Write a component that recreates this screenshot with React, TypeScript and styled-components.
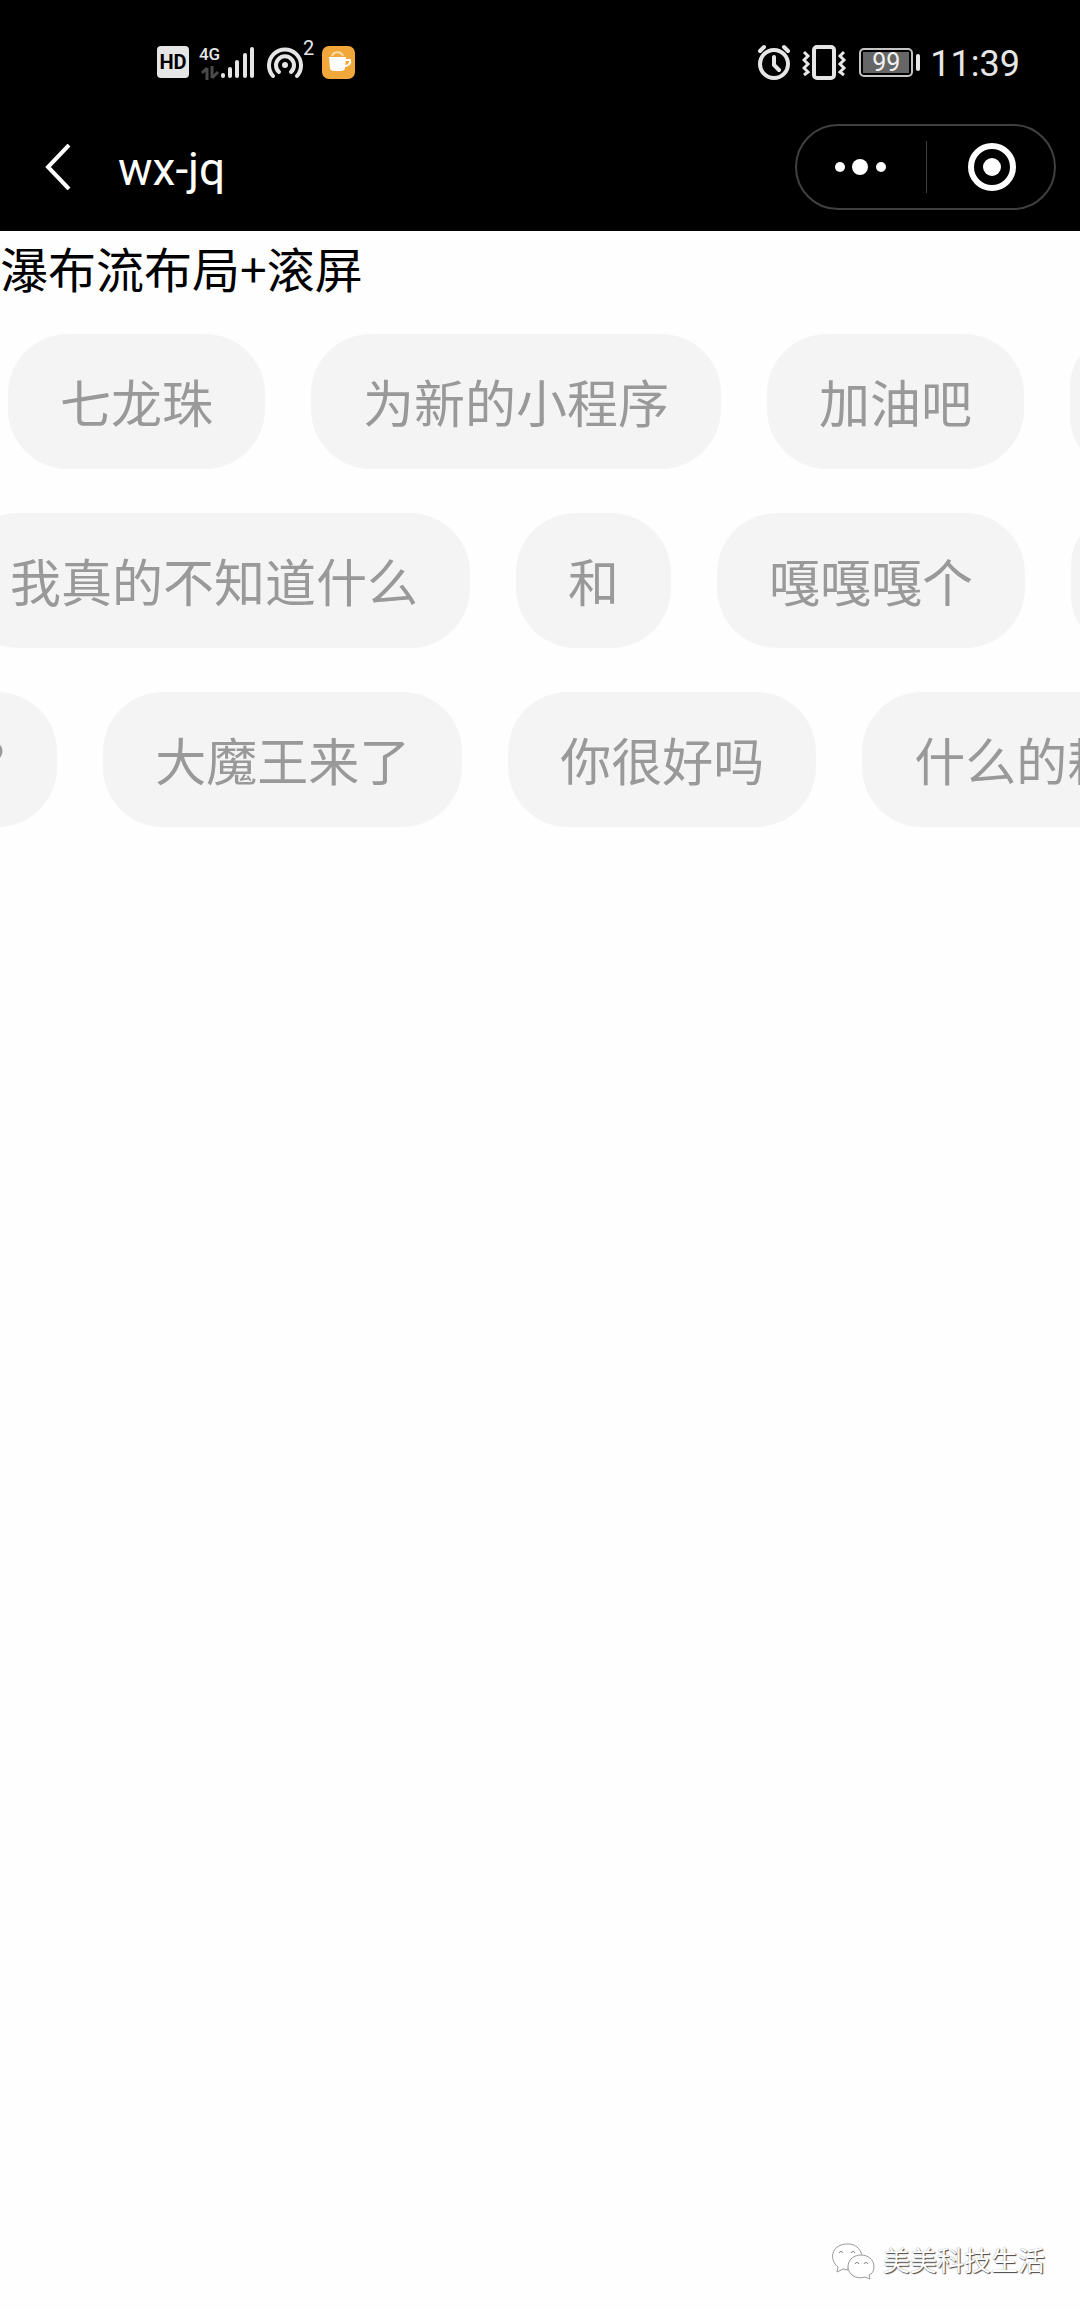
import React from "react";
import styled, { createGlobalStyle } from "styled-components";

const GlobalStyle = createGlobalStyle`
  * { box-sizing: border-box; }
  body {
    margin: 0;
    background: #fefefe;
    font-family: Roboto, "Noto Sans CJK SC", sans-serif;
  }
  button { font: inherit; color: inherit; background: none; border: 0; padding: 0; cursor: pointer; }
  svg { display: block; }
`;

const Page = styled.div`
  display: flex;
  flex-direction: column;
  min-height: 100vh;
  overflow: hidden;
`;

const Header = styled.header`
  background: #000;
  color: #fff;
`;

const StatusBar = styled.div`
  display: flex;
  justify-content: space-between;
  align-items: center;
  height: 124px;
  padding: 0 60px 0 157px;
  color: #e6e6e6;
`;

const StatusGroup = styled.div<{ $gap: number }>`
  display: flex;
  align-items: center;
  gap: ${(p) => p.$gap}px;
`;

const HdBadge = styled.span`
  width: 32px;
  height: 32px;
  border-radius: 4px;
  background: #e6e6e6;
  color: #000;
  font-size: 20px;
  line-height: 32px;
  font-weight: 700;
  text-align: center;
`;

const Hotspot = styled.div`
  display: flex;
  align-items: flex-start;
`;

const HotspotCount = styled.span`
  width: 10px;
  height: 36px;
  font-size: 20px;
  line-height: 8px;
`;

const Signal = styled.div`
  display: flex;
  align-items: flex-end;
`;

const Network = styled.div`
  display: flex;
  flex-direction: column;
  justify-content: space-between;
  align-items: center;
  width: 23px;
  height: 36px;
  font-size: 17px;
  line-height: 20px;
  font-weight: 500;
`;

const Battery = styled.div`
  display: flex;
  align-items: center;
  gap: 3px;
  &::after {
    content: "";
    width: 4px;
    height: 17px;
    border-radius: 2px;
    background: #e6e6e6;
  }
`;

const BatteryBody = styled.div`
  width: 54px;
  height: 29px;
  padding: 2px;
  border: 2px solid #c4c4c4;
  border-radius: 5px;
`;

const BatteryLevel = styled.div`
  width: 46px;
  height: 21px;
  background: #666;
  color: #f2f2f2;
  font-size: 25px;
  line-height: 22px;
  text-align: center;
`;

const Clock = styled.time`
  padding-top: 3px;
  font-size: 36px;
  line-height: 40px;
`;

const NavBar = styled.nav`
  display: flex;
  align-items: center;
  height: 107px;
  padding: 0 24px 21px 40px;
`;

const BackButton = styled.button`
  display: flex;
  justify-content: center;
  width: 36px;
`;

const NavTitle = styled.h1`
  flex: 1;
  margin: 0 0 0 42px;
  padding-top: 4px;
  font-size: 46px;
  line-height: 56px;
  font-weight: 400;
`;

const Capsule = styled.div`
  display: flex;
  align-items: center;
  width: 261px;
  height: 86px;
  border: 2px solid #404040;
  border-radius: 43px;
`;

const CapsuleButton = styled.button`
  display: flex;
  flex: 0 0 50%;
  justify-content: center;
  align-items: center;
  height: 52px;
  & + & {
    padding-left: 4px;
    border-left: 1px solid #404040;
  }
`;

const Heading = styled.h2`
  margin: 0;
  font-family: "Noto Sans CJK SC", sans-serif;
  font-size: 48px;
  line-height: 72px;
  font-weight: 400;
  color: #000;
`;

const Rows = styled.main`
  display: flex;
  flex-direction: column;
  gap: 44px;
  padding-top: 31px;
`;

const Track = styled.ul<{ $scrolled: number }>`
  display: flex;
  gap: 46px;
  margin: 0 0 0 ${(p) => -p.$scrolled}px;
  padding: 0;
  list-style: none;
`;

const Pill = styled.li`
  flex: none;
  height: 135px;
  padding: 29px 52px;
  border-radius: 60px;
  background: #f4f4f4;
  color: #999;
  font-family: "Noto Sans CJK SC", sans-serif;
  font-size: 51px;
  line-height: 77px;
  white-space: nowrap;
`;

const Footer = styled.footer`
  display: flex;
  justify-content: flex-end;
  align-items: center;
  gap: 8px;
  margin-top: auto;
  padding: 0 35px 28px;
  color: #fff;
  font-size: 27px;
  line-height: 40px;
  text-shadow: 1px 1px 1px #444, 0 0 1px #888;
`;

const rows = [
  { scrolled: -8, words: ["七龙珠", "为新的小程序", "加油吧", ""] },
  { scrolled: 42, words: ["我真的不知道什么", "和", "嘎嘎嘎个", ""] },
  { scrolled: 71, words: ["?", "大魔王来了", "你很好吗", "什么的耗"] },
];

const DataArrows = () => (
  <svg width="18" height="14" viewBox="0 0 18 14" aria-hidden="true">
    <path d="M6 14V2M1 7l5-5M11 0v12M11 12l6-6" stroke="#4a4a4a" strokeWidth="3" fill="none" />
  </svg>
);

const SignalIcon = () => (
  <svg width="34" height="36" viewBox="0 0 34 36" aria-hidden="true">
    <path d="M2 31v1M9 25v7M16 18v14M24 11v21M31 5v27" stroke="#e6e6e6" strokeWidth="4" strokeLinecap="round" />
  </svg>
);

const HotspotIcon = () => (
  <svg width="39" height="36" viewBox="0 0 39 36" fill="none" stroke="#e6e6e6" strokeWidth="4" strokeLinecap="round" aria-hidden="true">
    <path d="M9 32A16 16 0 1 1 33 32" />
    <path d="M15 28A9 9 0 1 1 27 28" />
    <circle cx="21" cy="21" r="3" fill="#e6e6e6" stroke="none" />
  </svg>
);

const CupIcon = () => (
  <svg width="33" height="33" viewBox="0 0 33 33" aria-hidden="true">
    <rect width="33" height="33" rx="7" fill="#f2a73b" />
    <path d="M7 11h17l-1 11c0 2-2 3-4 3h-7c-2 0-4-1-4-3z" fill="#fff" />
    <path d="M23 14h5c1 4-2 6-6 6" stroke="#fff" strokeWidth="2" fill="none" />
    <path d="M10 10c2-5 9-5 11 0" stroke="#fbdca9" strokeWidth="2" fill="none" />
  </svg>
);

const AlarmIcon = () => (
  <svg width="35" height="36" viewBox="0 0 35 36" fill="none" stroke="#e6e6e6" strokeWidth="4" strokeLinecap="round" aria-hidden="true">
    <circle cx="17" cy="20" r="14" />
    <path d="M17 13v8l5 5M3 7l4-4M31 7l-4-4" />
  </svg>
);

const VibrateIcon = () => (
  <svg width="47" height="36" viewBox="0 0 47 36" fill="none" stroke="#e6e6e6" strokeWidth="4" aria-hidden="true">
    <rect x="12" y="3" width="20" height="31" rx="3" />
    <path d="M2 8l4 4-4 4 4 4-4 4 4 4-4 3M42 8l-4 4 4 4-4 4 4 4-4 4 4 3" strokeWidth="3" />
  </svg>
);

const BackIcon = () => (
  <svg width="26" height="46" viewBox="0 0 26 46" fill="none" stroke="#fff" strokeWidth="4" aria-hidden="true">
    <path d="M24 1L3 23l21 22" />
  </svg>
);

const MoreIcon = () => (
  <svg width="52" height="18" viewBox="0 0 52 18" fill="#fff" aria-hidden="true">
    <circle cx="5" cy="9" r="5" />
    <circle cx="25" cy="9" r="8" />
    <circle cx="46" cy="9" r="5" />
  </svg>
);

const TargetIcon = () => (
  <svg width="48" height="48" viewBox="0 0 48 48" aria-hidden="true">
    <circle cx="24" cy="24" r="21" fill="none" stroke="#fff" strokeWidth="6" />
    <circle cx="24" cy="24" r="9" fill="#fff" />
  </svg>
);

const WechatIcon = () => (
  <svg width="44" height="38" viewBox="0 0 44 38" fill="#fff" stroke="#999" aria-hidden="true">
    <path d="M6 29l1-5C-2 17 0 2 15 1c9-1 15 5 16 12-8 0-14 6-14 14l-5-1z" />
    <path d="M39 36l-5-2c-9 3-17-3-17-10 0-16 26-16 26 0 0 4-2 7-5 8z" />
    <path d="M8 10c1-2 3-2 4 0M20 10c1-2 3-2 4 0M24 21c1-2 3-2 4 0M33 21c1-2 3-2 4 0" fill="none" stroke="#666" />
  </svg>
);

export default function App() {
  return (
    <Page>
      <GlobalStyle />
      <Header>
        <StatusBar>
          <StatusGroup $gap={9}>
            <HdBadge>HD</HdBadge>
            <Signal>
              <Network>
                4G
                <DataArrows />
              </Network>
              <SignalIcon />
            </Signal>
            <Hotspot>
              <HotspotIcon />
              <HotspotCount>2</HotspotCount>
            </Hotspot>
            <CupIcon />
          </StatusGroup>
          <StatusGroup $gap={10}>
            <AlarmIcon />
            <VibrateIcon />
            <Battery>
              <BatteryBody>
                <BatteryLevel>99</BatteryLevel>
              </BatteryBody>
            </Battery>
            <Clock>11:39</Clock>
          </StatusGroup>
        </StatusBar>
        <NavBar>
          <BackButton aria-label="返回">
            <BackIcon />
          </BackButton>
          <NavTitle>wx-jq</NavTitle>
          <Capsule>
            <CapsuleButton aria-label="更多">
              <MoreIcon />
            </CapsuleButton>
            <CapsuleButton aria-label="关闭">
              <TargetIcon />
            </CapsuleButton>
          </Capsule>
        </NavBar>
      </Header>
      <Heading>瀑布流布局+滚屏</Heading>
      <Rows>
        {rows.map((row, i) => (
          <Track key={i} $scrolled={row.scrolled}>
            {row.words.map((word, j) => (
              <Pill key={j}>{word}</Pill>
            ))}
          </Track>
        ))}
      </Rows>
      <Footer>
        <WechatIcon />
        <span>美美科技生活</span>
      </Footer>
    </Page>
  );
}
